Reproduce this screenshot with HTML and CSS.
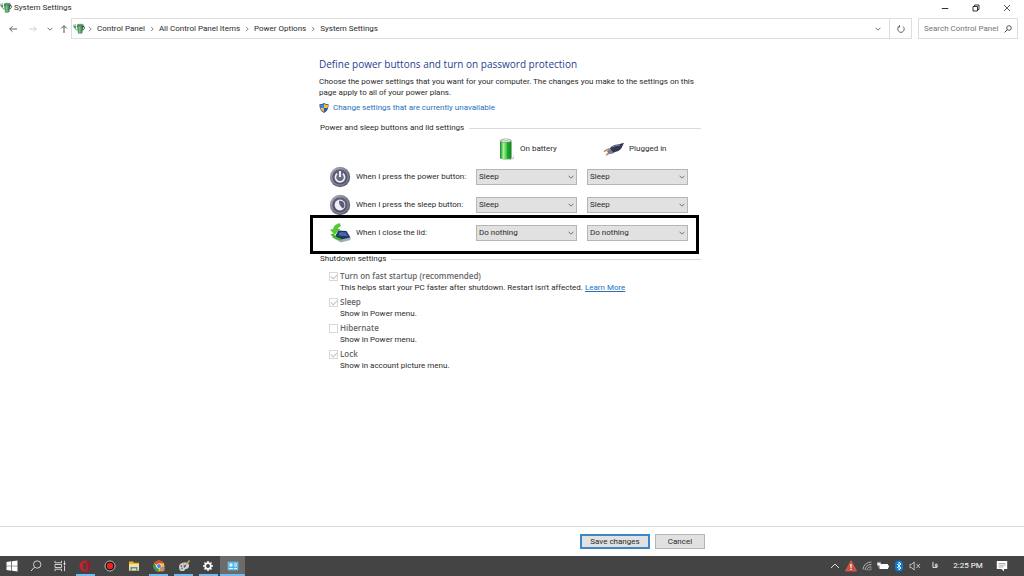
FILE: index.html
```html
<!DOCTYPE html>
<html lang="en">
<head>
<meta charset="utf-8">
<title>System Settings</title>
<link rel="stylesheet" href="styles.css">
</head>
<body>
<svg class="defs" aria-hidden="true">
  <defs>
    <linearGradient id="green" x1="0" x2="1" y1="0" y2="0"><stop offset="0" stop-color="#1f7a3c"/><stop offset=".4" stop-color="#7cc48a"/><stop offset="1" stop-color="#1c4f33"/></linearGradient>
    <linearGradient id="cell" x1="0" x2="1" y1="0" y2="0"><stop offset="0" stop-color="#128a20"/><stop offset=".3" stop-color="#a5f29a"/><stop offset=".6" stop-color="#35c43c"/><stop offset="1" stop-color="#0d7a1b"/></linearGradient>
    <radialGradient id="orb" cx=".5" cy=".45" r=".55"><stop offset="0" stop-color="#77778f"/><stop offset=".7" stop-color="#5b5b74"/><stop offset="1" stop-color="#4a4a62"/></radialGradient>
    <linearGradient id="ring" x1="0" x2="1" y1="0" y2="1"><stop offset="0" stop-color="#b9b9c6"/><stop offset=".5" stop-color="#77778a"/><stop offset="1" stop-color="#55556a"/></linearGradient>
    <symbol id="plan" viewBox="0 0 12 12">
      <path d="M4 2.500 10.500 1.700 9.300 10Q7 11.500 5 10.500z" fill="url(#green)"/>
      <ellipse cx="7.200" cy="2.200" rx="3.200" ry="1" fill="#5d9b6a" stroke="#2b6b3f" stroke-width=".5"/>
      <path d="M10 3.300Q11.800 3.300 11.300 5.300 10.800 7 9.600 7" fill="none" stroke="#27563a" stroke-width="1"/>
      <path d="M.8 1.500v1.500M2.300 1v1.500" stroke="#5b7a63" stroke-width=".6"/>
      <path d="M.4 3.100 3.200 2.500V4.500Q2.600 5.600 1.500 5.200.4 4.700.4 3.100z" fill="#4c9a5f"/>
      <path d="M2.100 5Q2.600 7.200 4.500 7" fill="none" stroke="#38834b" stroke-width=".7"/>
    </symbol>
    <symbol id="chev" viewBox="0 0 6 6"><path d="M.5 1.700 3 4.200 5.500 1.700" fill="none" stroke="currentColor" stroke-width=".8"/></symbol>
    <symbol id="sep" viewBox="0 0 6 6"><path d="M2 .8 4.200 3 2 5.200" fill="none" stroke="currentColor" stroke-width=".8"/></symbol>
  </defs>
</svg>

<header class="titlebar">
  <svg class="i12"><use href="#plan"/></svg>
  <span class="titlebar-name">System Settings</span>
  <div class="window-buttons">
    <button aria-label="Minimize"><svg class="i8" viewBox="0 0 8 8"><path d="M.8 4.500h6.500" stroke="#333" fill="none"/></svg></button>
    <button aria-label="Restore"><svg class="i8" viewBox="0 0 8 8"><path d="M1 2.500h4.500V7H1zM2.500 2.500V1H7v4.500H5.500" stroke="#222" fill="none" stroke-width=".9"/></svg></button>
    <button aria-label="Close"><svg class="i8" viewBox="0 0 8 8"><path d="m1 1 6 6M7 1 1 7" stroke="#333" fill="none" stroke-width=".8"/></svg></button>
  </div>
</header>

<nav class="navbar">
  <div class="arrows">
    <button aria-label="Back"><svg class="i8" viewBox="0 0 8 8"><path d="M8 4H.7M3.500 1.200.7 4l2.800 2.800" stroke="#555" fill="none" stroke-width=".9"/></svg></button>
    <button aria-label="Forward"><svg class="i8" viewBox="0 0 8 8"><path d="M0 4h7.300M4.500 1.200 7.300 4 4.500 6.800" stroke="#ccc" fill="none" stroke-width=".9"/></svg></button>
    <button class="narrow" aria-label="Recent"><svg class="i6"><use href="#chev"/></svg></button>
    <button class="narrow" aria-label="Up"><svg class="i8" viewBox="0 0 8 8"><path d="M4 8V.7M1.200 3.500 4 .7l2.800 2.800" stroke="#555" fill="none" stroke-width="1"/></svg></button>
  </div>
  <div class="address">
    <svg class="i12"><use href="#plan"/></svg>
    <ol class="crumbs">
      <li><svg class="i6"><use href="#sep"/></svg><a href="#">Control Panel</a></li>
      <li><svg class="i6"><use href="#sep"/></svg><a href="#">All Control Panel Items</a></li>
      <li><svg class="i6"><use href="#sep"/></svg><a href="#">Power Options</a></li>
      <li><svg class="i6"><use href="#sep"/></svg><a href="#">System Settings</a></li>
    </ol>
    <button class="history" aria-label="Previous locations"><svg class="i6"><use href="#chev"/></svg></button>
    <button class="refresh" aria-label="Refresh"><svg class="i8" viewBox="0 0 8 8"><path d="M5.800 1.500A3.200 3.200 0 1 1 2.200 1.500M2.500.2v1.900H.6" stroke="#555" fill="none" stroke-width=".9"/></svg></button>
  </div>
  <label class="search">
    <input type="text" placeholder="Search Control Panel" aria-label="Search Control Panel">
    <svg class="i8" viewBox="0 0 8 8"><circle cx="5" cy="3" r="2.300" fill="none" stroke="#444" stroke-width=".9"/><path d="M3.400 4.600.6 7.400" stroke="#444"/></svg>
  </label>
</nav>

<main class="page">
  <div class="content">
    <h1>Define power buttons and turn on password protection</h1>
    <p class="intro">Choose the power settings that you want for your computer. The changes you make to the settings on this page apply to all of your power plans.</p>
    <a class="admin-link" href="#">
      <svg class="i10" viewBox="0 0 10 10"><path d="M5 0Q7 1.200 9.600 1.200 9.800 7.500 5 10 .2 7.500.4 1.200 3 1.200 5 0z" fill="#2b5c9a"/><path d="M5 .9Q6.500 1.900 8.900 2 8.900 3.700 8.600 5H5z" fill="#f6bd3c"/><path d="M1.300 5H5V9.100Q2 7.700 1.300 5z" fill="#f6bd3c"/><path d="M5 .9Q3.500 1.900 1.100 2 1.100 3.700 1.400 5H5z" fill="#3f86cf"/></svg>
      <span>Change settings that are currently unavailable</span>
    </a>

    <h2><span>Power and sleep buttons and lid settings</span></h2>
    <div class="power-grid heads">
      <div class="head first">
        <svg class="battery" viewBox="0 0 16 22"><path d="M4 20.500h10l2-3v3l-3 1.500H5z" fill="#ccc"/><rect x="2" y="2.500" width="11.500" height="18.500" rx="1.500" fill="url(#cell)"/><ellipse cx="7.800" cy="2.800" rx="5.600" ry="1.700" fill="#d7dcd7" stroke="#57955b" stroke-width=".6"/><ellipse cx="7.800" cy="1.700" rx="2" ry=".9" fill="#eee" stroke="#999" stroke-width=".4"/><path d="M10 4v16" stroke="#0c8a21" stroke-width="1.500" opacity=".6"/></svg>
        <span>On battery</span>
      </div>
      <div class="head">
        <svg class="plug" viewBox="0 0 22 14"><path d="M1 9.500 6.500 6.500M3 13l5-3" stroke="#b98b70" stroke-width="1.500"/><path d="M4 9.500 9 4.500 14 8 10 11.500 6 12z" fill="#777d91"/><path d="M7 6Q10 2.500 15 2.500L21 .8 19.500 4Q18 8.500 13 9.800L10 10.500z" fill="#32384f"/><path d="M9 5.200Q12 3.300 17 3" stroke="#8188a0" fill="none"/></svg>
        <span>Plugged in</span>
      </div>
    </div>

    <div class="power-grid">
      <svg class="i22" viewBox="0 0 22 22"><circle cx="11" cy="11" r="10.200" fill="url(#ring)"/><circle cx="11" cy="11" r="8" fill="url(#orb)" stroke="#a3a3b5" stroke-width=".6"/><path d="M8.200 7.600a4.600 4.600 0 1 0 5.600 0" fill="none" stroke="#eeeef8" stroke-width="1.700"/><path d="M11 5v6" stroke="#fff" stroke-width="1.800"/></svg>
      <span>When I press the power button:</span>
      <div class="picker"><select aria-label="Power button, on battery"><option>Sleep</option><option>Do nothing</option></select><svg class="i6"><use href="#chev"/></svg></div>
      <div class="picker"><select aria-label="Power button, plugged in"><option>Sleep</option><option>Do nothing</option></select><svg class="i6"><use href="#chev"/></svg></div>
    </div>
    <div class="power-grid">
      <svg class="i22" viewBox="0 0 22 22"><circle cx="11" cy="11" r="10.200" fill="url(#ring)"/><circle cx="11" cy="11" r="8" fill="url(#orb)" stroke="#a3a3b5" stroke-width=".6"/><circle cx="11" cy="11" r="5.400" fill="#eeeef6"/><path d="M10 6.800Q15 6.300 15.600 11 15.600 13.500 14 14.600 9.800 12 10 6.800z" fill="#5c5c76"/></svg>
      <span>When I press the sleep button:</span>
      <div class="picker"><select aria-label="Sleep button, on battery"><option>Sleep</option><option>Do nothing</option></select><svg class="i6"><use href="#chev"/></svg></div>
      <div class="picker"><select aria-label="Sleep button, plugged in"><option>Sleep</option><option>Do nothing</option></select><svg class="i6"><use href="#chev"/></svg></div>
    </div>
    <div class="power-grid marked">
      <svg class="i22" viewBox="0 0 22 22"><path d="M3 15.500 12 11.500 21.500 16V18L12 20.500z" fill="#a3adbc"/><path d="M6 14.500 9.500 8.500 17.500 9 21.500 15.500 12 17.500z" fill="#1f3566"/><path d="M9 13.500 11 10 16.500 10.300 19 14.300z" fill="#4668a5"/><path d="M10.500 1.500Q4.500 3 4.500 7.500L1.500 7.800 5.500 12.300 11 7.300 8.200 7.500Q8.500 5 11.500 4z" fill="#52cf2c" stroke="#268715" stroke-width=".4"/><path d="M1.500 12.500Q6 18 13 18.500L12 16.500Q6.500 15.500 4.500 11.500z" fill="#3eb91f"/></svg>
      <span>When I close the lid:</span>
      <div class="picker"><select aria-label="Lid, on battery"><option>Do nothing</option><option>Sleep</option></select><svg class="i6"><use href="#chev"/></svg></div>
      <div class="picker"><select aria-label="Lid, plugged in"><option>Do nothing</option><option>Sleep</option></select><svg class="i6"><use href="#chev"/></svg></div>
    </div>

    <h2 class="shutdown-title"><span>Shutdown settings</span></h2>
    <div class="shutdown">
      <div><label><input type="checkbox" checked disabled>Turn on fast startup (recommended)</label>
        <p>This helps start your PC faster after shutdown. Restart isn't affected. <a href="#">Learn More</a></p></div>
      <div><label><input type="checkbox" checked disabled>Sleep</label><p>Show in Power menu.</p></div>
      <div><label><input type="checkbox" disabled>Hibernate</label><p>Show in Power menu.</p></div>
      <div><label><input type="checkbox" checked disabled>Lock</label><p>Show in account picture menu.</p></div>
    </div>
  </div>
</main>

<footer class="actions">
  <button class="btn primary">Save changes</button>
  <button class="btn">Cancel</button>
</footer>

<div class="taskbar">
  <div class="system">
    <button aria-label="Start"><svg class="i12" viewBox="0 0 12 12"><path d="M.5 2 5.300 1.300V5.700H.5zM6 1.200 11.500.5V5.700H6zM.5 6.300H5.300V10.700L.5 10zM6 6.300H11.500V11.500L6 10.800z" fill="#fff"/></svg></button>
    <button aria-label="Search"><svg class="i12" viewBox="0 0 12 12"><circle cx="7.200" cy="4.500" r="3.700" fill="none" stroke="#ddd" stroke-width=".9"/><path d="M4.500 7.200 1 11" stroke="#ddd"/></svg></button>
    <button aria-label="Task view"><svg class="i12" viewBox="0 0 12 12"><path d="M1 .8v2h6.500v-2M1 11.200v-2h6.500v2M1 4.500h6.500v3H1zM10.500.8v2M10.500 5.500v5.700" fill="none" stroke="#ddd" stroke-width=".9"/><path d="M9.700 3h1.600v1.700H9.700z" fill="#fff"/></svg></button>
  </div>
  <div class="apps">
    <button class="open" aria-label="Opera"><svg class="i12" viewBox="0 0 12 12"><path fill-rule="evenodd" d="M6 .5a5.500 5.500 0 1 0 0 11 5.500 5.500 0 0 0 0-11zm0 1.800c1.400 0 2.200 1.600 2.200 3.700S7.400 9.700 6 9.700 3.800 8.100 3.800 6 4.600 2.300 6 2.300z" fill="#d31d2c"/><path d="M7 .6a5.500 5.500 0 0 1 0 10.800Q9.500 9 9 6T7 .6z" fill="#a81422"/></svg></button>
    <button aria-label="Recorder"><svg class="i12" viewBox="0 0 12 12"><circle cx="6" cy="6" r="5" fill="#111" stroke="#ddd" stroke-width=".8"/><circle cx="6" cy="6" r="3.200" fill="#ed2024"/></svg></button>
    <button aria-label="File Explorer"><svg class="i12" viewBox="0 0 12 12"><path d="M1 1.500h4l1 1.300h5v7.700H1z" fill="#e8b53b"/><path d="M1 4h10v6.500H1z" fill="#ffe08a"/><path d="M2.500 10.500V7h7v3.500H8V8.500H4v2z" fill="#3b94d6"/></svg></button>
    <button class="open" aria-label="Chrome"><svg class="i12" viewBox="0 0 12 12"><circle cx="6" cy="6" r="5.500" fill="#f5c32b"/><path d="M6 6 1.300 3.200A5.500 5.500 0 0 1 10.800 3.300H6z" fill="#df4435"/><path d="M1.300 3.200 3.700 7.500 6 8.500 5.200 11.500A5.500 5.500 0 0 1 1.300 3.200z" fill="#2e9e51"/><circle cx="6" cy="6" r="2.600" fill="#fff"/><circle cx="6" cy="6" r="2" fill="#4384f0"/><circle cx="9.200" cy="9" r="2.500" fill="#c58c73"/></svg></button>
    <button class="open" aria-label="Paint"><svg class="i12" viewBox="0 0 12 12"><path d="M1 7Q1 3 6 2.500t5 3Q11 9 7.500 9L6 11H3Q1 10 1 7z" fill="#c8d7df"/><circle cx="3.300" cy="6" r="1" fill="#d65540"/><circle cx="5.500" cy="4.500" r="1" fill="#e6ac35"/><circle cx="4" cy="8.500" r="1" fill="#48a558"/><path d="M11.500.5 6.500 6.500" stroke="#d9a55b" stroke-width="1.400"/><path d="m7.500 5.300-1.500 2" stroke="#345b91" stroke-width="1.500"/></svg></button>
    <button class="open" aria-label="Settings"><svg class="i12" viewBox="0 0 12 12"><circle cx="6" cy="6" r="2.800" fill="none" stroke="#fff" stroke-width="1.700"/><path d="M6 1v1.800M6 9.200V11M1 6h1.800M9.200 6H11M2.500 2.500l1.200 1.200M8.300 8.300l1.200 1.200M2.500 9.500l1.200-1.200M8.300 3.700l1.200-1.200" stroke="#fff" stroke-width="1.500"/></svg></button>
    <button class="open current" aria-label="Control Panel"><svg class="i12" viewBox="0 0 12 12"><path d="M1 2h10v8H1z" fill="#4fb4ea" stroke="#8ad4f8" stroke-width=".5"/><circle cx="4" cy="5" r="1.700" fill="#e9f8ff"/><path d="M7 4h3M7 6h3M2 8.500h4M7 8.500h3" stroke="#fff" stroke-width=".9"/></svg></button>
  </div>
  <div class="tray">
    <button aria-label="Hidden icons"><svg class="i10" viewBox="0 0 10 10"><path d="m1 7 4-4 4 4" stroke="#ddd" fill="none"/></svg></button>
    <button aria-label="Warning"><svg class="i12" viewBox="0 0 12 12"><path d="M6 .7 11.500 11H.5z" fill="#d9493a" stroke="#ed8172" stroke-width=".5"/><path d="M6 4v3.800M6 8.700v1.300" stroke="#fff" stroke-width="1.300"/></svg></button>
    <button aria-label="Network"><svg class="i10" viewBox="0 0 10 10"><path d="M1 8.500A8 8 0 0 1 9.500 1M3 9A6 6 0 0 1 9.500 3.500M5 9.300A4 4 0 0 1 9.500 6M7 9.500A2.500 2.500 0 0 1 9.500 8" fill="none" stroke="#ccc" stroke-width=".8"/></svg></button>
    <button aria-label="Battery"><svg class="i12" viewBox="0 0 12 12"><path d="M2.500 4H11v5H2.500zM11 5.500h1v2h-1z" fill="#fff"/><path d="M.5 3h3v2.300h-3zM1 1.500v1.500M3 1.500v1.500M2 5v3" fill="#fff" stroke="#ddd" stroke-width=".6"/></svg></button>
    <button aria-label="Bluetooth"><svg class="i12" viewBox="0 0 12 12"><rect x="2" y=".5" width="8" height="11" rx="3.800" fill="#0a78d7"/><path d="m4 4 4 4-2 2V2l2 2-4 4" fill="none" stroke="#fff" stroke-width=".9"/></svg></button>
    <button aria-label="Muted"><svg class="i12" viewBox="0 0 12 12"><path d="M1 4.300h1.700L5.200 2v8L2.700 7.700H1z" fill="none" stroke="#ddd" stroke-width=".8"/><path d="m7.500 4 3.500 4M11 4 7.500 8" stroke="#ddd" stroke-width=".8"/></svg></button>
    <button class="lang" lang="fa">فا</button>
    <button class="clock">2:25 PM</button>
    <button class="notes" aria-label="Notifications"><svg class="i12" viewBox="0 0 12 12"><path d="M.8 1h10.400v8H8v2.500L5.500 9H.8z" fill="#fff"/><path d="M2.500 3.500h7M2.500 5.200h7M2.500 7h5" stroke="#777" stroke-width=".6"/></svg></button>
  </div>
</div>
</body>
</html>
```
FILE: styles.css
```css
* { box-sizing: border-box; margin: 0; padding: 0; }

body {
  display: flex;
  flex-direction: column;
  min-height: 100vh;
  background: #fff;
  color: #2b2b2b;
  font: 8px/12px Roboto, "Open Sans", sans-serif;
}

button, input, select { font: inherit; color: inherit; }
button { border: 0; background: none; display: flex; align-items: center; justify-content: center; }
a { color: #2672bd; text-decoration: none; }
svg { display: block; flex: none; }

.defs { position: absolute; width: 0; height: 0; }
.i6 { width: 6px; height: 6px; }
.i8 { width: 8px; height: 8px; }
.i10 { width: 10px; height: 10px; }
.i12 { width: 12px; height: 12px; }
.i22 { width: 22px; height: 22px; }

.titlebar { display: flex; align-items: center; height: 16px; gap: 2px; padding-right: 2px; }
.window-buttons { display: flex; margin-left: auto; }
.window-buttons button { width: 31px; height: 16px; }

.navbar { display: flex; height: 21px; margin-top: 2px; padding-right: 6px; }
.arrows { display: flex; padding-left: 3px; }
.arrows button { width: 20px; color: #555; }
.arrows .narrow { width: 14px; }
.address { display: flex; flex: 1; align-items: center; border: 1px solid #dedede; padding-left: 1px; }
.crumbs { display: flex; list-style: none; padding-left: 2px; }
.crumbs li { display: flex; align-items: center; gap: 4px; padding-right: 4px; color: #666; }
.crumbs a { color: #2b2b2b; }
.history { width: 22px; height: 19px; margin-left: auto; color: #555; }
.refresh { width: 22px; height: 19px; border-left: 1px solid #dedede; }
.search { display: flex; align-items: center; width: 100px; margin-left: 6px; padding: 0 5px; border: 1px solid #dedede; }
.search input { flex: 1; min-width: 0; border: 0; background: none; outline: 0; }
.search input::placeholder { color: #757575; opacity: 1; }

.page { flex: 1; padding: 17px 4px 0 0; }
.content { max-width: 382px; margin: 0 auto; }
h1 { font: 400 10px/16px "Open Sans", sans-serif; color: #1f3f8c; }
.intro { line-height: 11px; margin-top: 4px; }
.admin-link { display: flex; align-items: center; gap: 4px; margin-top: 4px; }

h2 { display: flex; align-items: center; gap: 5px; margin-top: 8px; padding-left: 1px; font-size: 8px; font-weight: 400; }
h2::after { content: ""; flex: 1; height: 1px; background: #dadada; }

.power-grid {
  display: grid;
  grid-template-columns: 22px minmax(0, 1fr) 101px 101px;
  column-gap: 10px;
  align-items: center;
  height: 28px;
  padding: 0 13px 0 10px;
}
.power-grid > span { margin-left: -5px; white-space: nowrap; }
.heads { height: 29px; }
.head { display: flex; align-items: center; gap: 4px; padding-left: 16px; white-space: nowrap; }
.head.first { grid-column: 3; padding-left: 22px; gap: 6px; }
.battery { width: 16px; height: 22px; }
.plug { width: 22px; height: 14px; }

.picker { display: grid; align-items: center; }
.picker > * { grid-area: 1 / 1; }
.picker select { appearance: none; width: 100%; height: 16px; padding: 0 2px; border: 1px solid #b5b5b5; border-radius: 0; background: #e1e1e1; }
.picker svg { justify-self: end; margin-right: 3px; color: #555; pointer-events: none; }

.marked { position: relative; }
.marked::after { content: ""; position: absolute; inset: -4px 2px -7px -9px; border: 3px solid #000; pointer-events: none; }

.shutdown-title { margin-top: 6px; }
.shutdown { display: grid; gap: 2px; padding: 5px 0 0 10px; }
.shutdown label { display: flex; align-items: center; gap: 2px; height: 12px; font-family: "Open Sans", sans-serif; font-weight: 600; color: #666; }
.shutdown p { padding-left: 11px; white-space: nowrap; }
.shutdown p a { text-decoration: underline; }
.shutdown input { appearance: none; display: grid; place-items: center; width: 9px; height: 9px; border: 1px solid #d8d8d8; background: #fff; }
.shutdown input:checked::before { content: ""; width: 5px; height: 3px; border: solid #c4c4c4; border-width: 0 0 1px 1px; transform: rotate(-45deg); }

.actions { display: flex; justify-content: center; gap: 5px; height: 30px; padding: 7px 0 0 261px; border-top: 1px solid #dcdcdc; }
.btn { width: 50px; height: 15px; border: 1px solid #b5b5b5; background: #e1e1e1; }
.btn.primary { width: 70px; border: 2px solid #3b87c8; }

.taskbar { display: flex; height: 20px; background: #444; color: #fff; }
.taskbar button { height: 20px; }
.system { display: grid; grid-template-columns: repeat(3, 24px); }
.apps { display: grid; grid-template-columns: repeat(7, 1fr); width: 172px; margin-left: 1px; }
.apps button { border: solid transparent; border-width: 2px 0; }
.apps .open { background: linear-gradient(#76b9ed, #76b9ed) bottom / 19px 2px no-repeat border-box; }
.apps .current { background: linear-gradient(#76b9ed, #76b9ed) bottom / 100% 2px no-repeat border-box #6b6b6b; }
.tray { display: flex; margin-left: auto; padding-right: 9px; }
.tray button { width: 16px; }
.tray .lang { width: 24px; font-family: "DejaVu Sans", sans-serif; }
.tray .clock { width: 42px; }
.tray .notes { width: 26px; }
```
